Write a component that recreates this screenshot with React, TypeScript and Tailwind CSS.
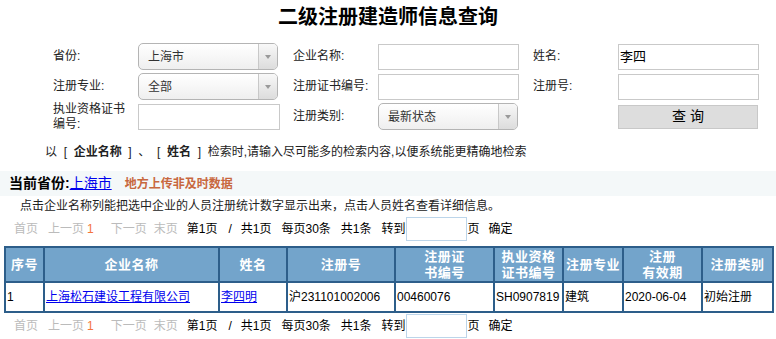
import React from "react";

const FONT = { fontFamily: '"Liberation Sans", Arial, "Noto Sans CJK SC", sans-serif' };

function Select({ value, w = "w-[140px]" }: { value: string; w?: string }) {
  return (
    <div
      className={`${w} h-[27px] rounded-[5px] border border-[#b4b4b4] flex overflow-hidden bg-gradient-to-b from-white to-[#efefef]`}
    >
      <div className="flex-1 pl-[9px] flex items-center text-[12px] text-[#333]">{value}</div>
      <div className="w-[19px] border-l border-[#c8c8c8] bg-gradient-to-b from-[#f8f8f8] to-[#dcdcdc] flex items-center justify-center">
        <svg width="6" height="4" viewBox="0 0 6 4">
          <path d="M0 0 L6 0 L3 4 Z" fill="#999" />
        </svg>
      </div>
    </div>
  );
}

function Input({ value = "", w = "w-[141px]", h = "h-[26px]" }: { value?: string; w?: string; h?: string }) {
  return (
    <div className={`${w} ${h} border border-[#c9c9c9] bg-white flex items-center pl-[1px] text-[13px] text-black`}>
      {value}
    </div>
  );
}

function Label({ children }: { children: React.ReactNode }) {
  return <div className="w-[85px] text-[12px] text-[#222] leading-[15px]">{children}</div>;
}

function Pager() {
  return (
    <div className="flex items-center h-[24px] text-[12px] text-black whitespace-nowrap">
      <span className="ml-[14px] text-[#bbb]">首页</span>
      <span className="ml-[10px] text-[#bbb]">上一页</span>
      <span className="ml-[3px] text-[#f4743b]">1</span>
      <span className="ml-[17px] text-[#bbb]">下一页</span>
      <span className="ml-[7px] text-[#bbb]">末页</span>
      <span className="ml-[9px]">第1页</span>
      <span className="ml-[11px]">/</span>
      <span className="ml-[9px]">共1页</span>
      <span className="ml-[10px]">每页30条</span>
      <span className="ml-[10px]">共1条</span>
      <span className="ml-[10px]">转到</span>
      <div className="w-[61px] h-[24px] border border-[#bcd5ea] bg-white" />
      <span className="ml-[1px]">页</span>
      <span className="ml-[9px]">确定</span>
    </div>
  );
}

export default function App() {
  const th = "border-2 border-[#2d5e8a] text-white font-bold text-[13px] leading-[16px] tracking-[0.5px] text-center";
  const td = "border-2 border-[#2d5e8a] text-[12px] text-black pl-[1px] text-left";
  return (
    <div className="w-[776px] h-[339px] bg-white overflow-hidden" style={FONT}>
      <div className="pt-[6px] h-[43px] text-center text-[20px] leading-[22px] font-bold text-black">
        二级注册建造师信息查询
      </div>

      <div className="flex flex-col gap-[3px] pl-[53px]">
        <div className="flex items-center h-[27px]">
          <Label>省份:</Label>
          <Select value="上海市" />
          <div className="w-[15px]" />
          <Label>企业名称:</Label>
          <Input />
          <div className="w-[14px]" />
          <Label>姓名:</Label>
          <Input value="李四" />
        </div>
        <div className="flex items-center h-[27px]">
          <Label>注册专业:</Label>
          <Select value="全部" />
          <div className="w-[15px]" />
          <Label>注册证书编号:</Label>
          <Input />
          <div className="w-[14px]" />
          <Label>注册号:</Label>
          <Input />
        </div>
        <div className="flex items-center h-[27px]">
          <Label>
            执业资格证书
            <br />
            编号:
          </Label>
          <Input w="w-[142px]" />
          <div className="w-[13px]" />
          <Label>注册类别:</Label>
          <Select value="最新状态" />
          <div className="w-[15px]" />
          <div className="w-[85px]" />
          <button className="w-[140px] h-[24px] bg-[#dddddd] border border-[#c8c8c8] text-[14px] text-black">
            查 询
          </button>
        </div>
      </div>

      <div className="mt-[14px] pl-[45px] text-[12px] leading-[16px] text-[#222] whitespace-pre">
        {"以  [  "}
        <b>企业名称</b>
        {"  ]  、  [  "}
        <b>姓名</b>
        {"  ]  检索时,请输入尽可能多的检索内容,以便系统能更精确地检索"}
      </div>

      <div className="mt-[11px] h-[25px] bg-[#f4f8f9] flex items-center pl-[9px] whitespace-nowrap">
        <span className="text-[14px] font-bold text-black">当前省份:</span>
        <span className="text-[14px] text-[#0000ee] underline">上海市</span>
        <span className="ml-[13px] text-[12px] font-bold text-[#c8673e]">地方上传非及时数据</span>
      </div>

      <div className="mt-[2px] pl-[20px] text-[12px] leading-[16px] text-[#222]">
        点击企业名称列能把选中企业的人员注册统计数字显示出来，点击人员姓名查看详细信息。
      </div>

      <div className="mt-[3px]">
        <Pager />
      </div>

      <div className="mt-[5px] pl-[4px]">
        <table className="w-[768px] table-fixed border-collapse">
          <colgroup>
            <col className="w-[39px]" />
            <col className="w-[175px]" />
            <col className="w-[68px]" />
            <col className="w-[108px]" />
            <col className="w-[99px]" />
            <col className="w-[69px]" />
            <col className="w-[60px]" />
            <col className="w-[79px]" />
            <col className="w-[71px]" />
          </colgroup>
          <thead>
            <tr className="h-[35px] bg-[#73a4cb]">
              <th className={th}>序号</th>
              <th className={th}>企业名称</th>
              <th className={th}>姓名</th>
              <th className={th}>注册号</th>
              <th className={th}>
                注册证
                <br />
                书编号
              </th>
              <th className={th}>
                执业资格
                <br />
                证书编号
              </th>
              <th className={th}>注册专业</th>
              <th className={th}>
                注册
                <br />
                有效期
              </th>
              <th className={th}>注册类别</th>
            </tr>
          </thead>
          <tbody>
            <tr className="h-[30px] bg-white">
              <td className={td}>1</td>
              <td className={td}>
                <span className="text-[#0000ee] underline">上海松石建设工程有限公司</span>
              </td>
              <td className={td}>
                <span className="text-[#0000ee] underline">李四明</span>
              </td>
              <td className={td}>沪231101002006</td>
              <td className={td}>00460076</td>
              <td className={td}>SH0907819</td>
              <td className={td}>建筑</td>
              <td className={td}>2020-06-04</td>
              <td className={td}>初始注册</td>
            </tr>
          </tbody>
        </table>
      </div>

      <div className="mt-[1px]">
        <Pager />
      </div>
    </div>
  );
}
